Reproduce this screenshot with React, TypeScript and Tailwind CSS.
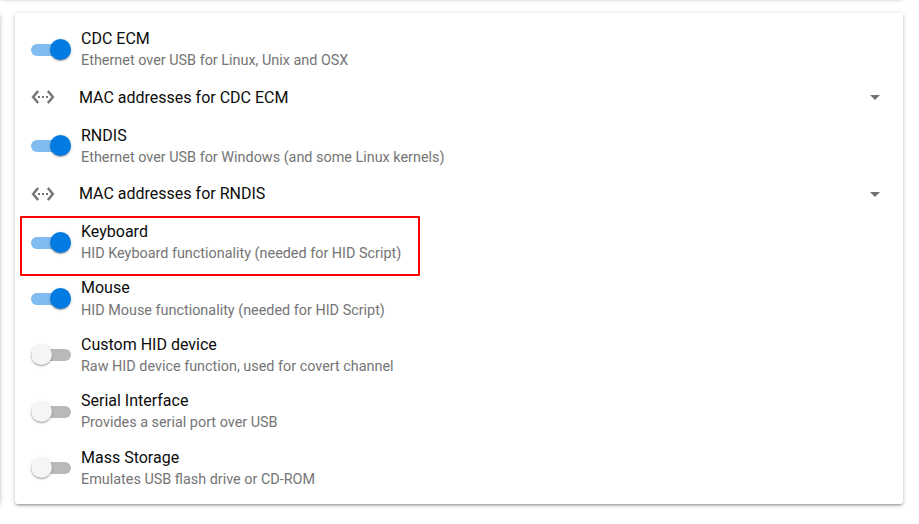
import { useState } from "react";
import { MdArrowDropDown } from "react-icons/md";

const cardClass =
  "rounded-[3px] bg-white shadow-[0_1px_5px_rgba(0,0,0,0.2),0_2px_2px_rgba(0,0,0,0.14),0_3px_1px_-2px_rgba(0,0,0,0.12)]";

function EthernetIcon({ className }: { className?: string }) {
  return (
    <svg viewBox="0 0 24 24" fill="currentColor" className={className} aria-hidden="true">
      <path
        stroke="currentColor"
        strokeWidth="0.5"
        d="M7.77 6.76 6.23 5.48.82 12l5.41 6.52 1.54-1.28L3.42 12l4.35-5.24zM17.77 5.48l-1.54 1.28L20.58 12l-4.35 5.24 1.54 1.28L23.18 12l-5.41-6.52z"
      />
      <path d="M7 13h2v-2H7v2zm10-2h-2v2h2v-2zm-6 2h2v-2h-2v2z" />
    </svg>
  );
}

function Toggle({ on, label, onChange }: { on: boolean; label: string; onChange: () => void }) {
  return (
    <button
      type="button"
      role="switch"
      aria-checked={on}
      aria-label={label}
      onClick={onChange}
      className="relative flex h-[21px] w-10 shrink-0 items-center"
    >
      <span className={`mt-px h-3 w-10 rounded-full ${on ? "bg-[#80bcf1]" : "bg-[#b9b9b9]"}`} />
      <span
        className={`absolute top-0 size-[21px] rounded-full shadow-[0_1px_3px_rgba(0,0,0,0.2),0_1px_1px_rgba(0,0,0,0.14),0_2px_1px_-1px_rgba(0,0,0,0.12)] ${
          on ? "right-0 bg-[#027be3]" : "left-0 bg-[#f5f5f5]"
        }`}
      />
    </button>
  );
}

function ToggleRow({
  title,
  detail,
  enabled = false,
  highlighted = false,
}: {
  title: string;
  detail: string;
  enabled?: boolean;
  highlighted?: boolean;
}) {
  const [on, setOn] = useState(enabled);
  return (
    <div className="relative flex h-[56.4px] items-center gap-2.5 px-4">
      <Toggle on={on} label={title} onChange={() => setOn(!on)} />
      <div className="pt-[0.8px]">
        <div className="text-base leading-[22px] text-[#0c0c0c]">{title}</div>
        <div className="mt-[0.2px] text-[14.4px] leading-[21px] text-[#757575]">{detail}</div>
      </div>
      {highlighted && (
        <div className="pointer-events-none absolute top-[2px] left-[5px] h-[60px] w-[400px] rounded-[1px] border-2 border-[#fb0000]" />
      )}
    </div>
  );
}

function ExpandRow({ title }: { title: string }) {
  return (
    <div className="flex h-10 items-center px-4 text-[#737373]">
      <EthernetIcon className="mb-[0.6px] size-6" />
      <div className="ml-6 flex-1 text-base leading-5 text-[#0c0c0c]">{title}</div>
      <MdArrowDropDown className="mb-[0.6px] size-6" />
    </div>
  );
}

export default function App() {
  return (
    <div className="flex h-[524px] w-[919px] flex-col overflow-hidden bg-white font-['Roboto',sans-serif]">
      <div className={`-mt-[22px] mr-4 h-5 shrink-0 ${cardClass}`} />
      <div className="mt-[15px] -ml-5 flex h-[491px] gap-[15px] pr-4">
        <div className={`w-5 shrink-0 ${cardClass}`} />
        <div className={`flex-1 pt-[8.2px] ${cardClass}`}>
          <ToggleRow title="CDC ECM" detail="Ethernet over USB for Linux, Unix and OSX" enabled />
          <ExpandRow title="MAC addresses for CDC ECM" />
          <ToggleRow title="RNDIS" detail="Ethernet over USB for Windows (and some Linux kernels)" enabled />
          <ExpandRow title="MAC addresses for RNDIS" />
          <ToggleRow
            title="Keyboard"
            detail="HID Keyboard functionality (needed for HID Script)"
            enabled
            highlighted
          />
          <ToggleRow title="Mouse" detail="HID Mouse functionality (needed for HID Script)" enabled />
          <ToggleRow title="Custom HID device" detail="Raw HID device function, used for covert channel" />
          <ToggleRow title="Serial Interface" detail="Provides a serial port over USB" />
          <ToggleRow title="Mass Storage" detail="Emulates USB flash drive or CD-ROM" />
        </div>
      </div>
    </div>
  );
}
